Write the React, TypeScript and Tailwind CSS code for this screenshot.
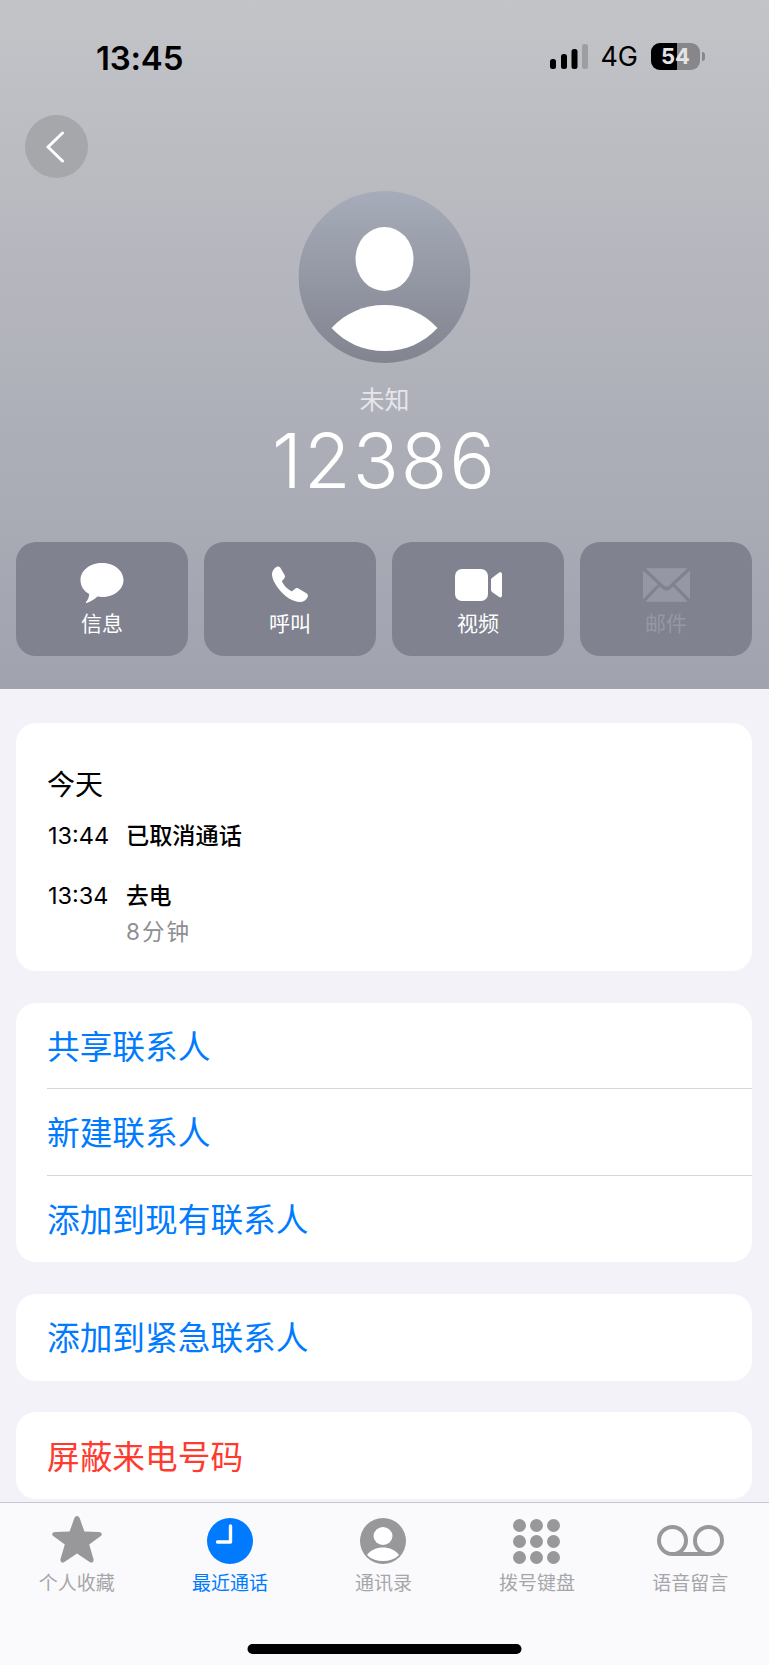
const SANS = "font-['Inter','Noto_Sans_CJK_SC',sans-serif]";

function ActionButton({ label, dim, children }: { label: string; dim?: boolean; children: React.ReactNode }) {
  return (
    <div className="flex h-[114px] flex-col items-center rounded-[20px] bg-[#80828f]">
      <div className="flex h-[64px] w-full items-end justify-center pb-[3px]">{children}</div>
      <div className={`mt-[4px] text-[21px] leading-[28px] ${dim ? "text-[#9598a4]" : "text-white"}`}>{label}</div>
    </div>
  );
}

function Row({ text, red, divider }: { text: string; red?: boolean; divider?: boolean }) {
  return (
    <div className={`ml-[31px] flex h-[86.6px] items-center pt-[3px] ${divider ? "border-b border-[#d6d6da]" : ""}`}>
      <span className={`text-[32.7px] leading-none ${red ? "text-[#ff3b30]" : "text-[#007aff]"}`}>{text}</span>
    </div>
  );
}

function Tab({ label, active, children }: { label: string; active?: boolean; children: React.ReactNode }) {
  return (
    <div className="flex flex-col items-center">
      <div className="flex h-[50px] items-end justify-center">{children}</div>
      <div className={`mt-[8px] text-[19px] leading-[24px] ${active ? "text-[#007aff]" : "text-[#a6a6aa]"}`}>{label}</div>
    </div>
  );
}

export default function App() {
  return (
    <div className={`${SANS} flex h-[1665px] w-[769px] flex-col overflow-hidden bg-[#f2f2f8] text-black`}>
      <header className="h-[689px] shrink-0 bg-gradient-to-b from-[#c3c4c8] to-[#a0a2ae]">
        <div className="flex h-[115px] items-start justify-between pl-[96px] pr-[64px] pt-[38px]">
          <span className="text-[33px] font-semibold leading-[40px] tracking-[-0.2px]">13:45</span>
          <div className="flex items-center pt-[5px]">
            <svg width="39" height="25" viewBox="0 0 39 25">
              <rect x="0" y="15" width="6" height="10" rx="2.5" fill="#000" />
              <rect x="11" y="10" width="6" height="15" rx="2.5" fill="#000" />
              <rect x="21.5" y="5" width="6" height="20" rx="2.5" fill="#000" />
              <rect x="32" y="0" width="6" height="25" rx="2.5" fill="#9d9ea2" />
            </svg>
            <span className="ml-[11px] text-[27px] leading-[26px]">4G</span>
            <div className="relative ml-[13px] flex h-[27px] w-[49px] overflow-hidden rounded-[9px] bg-[#87878b]">
              <div className="h-full w-[26px] bg-black" />
              <span className="absolute inset-0 text-center text-[22px] font-bold leading-[27px] text-[#e4e4e6]">54</span>
            </div>
            <div className="ml-[2px] h-[9px] w-[3px] rounded-r-full bg-[#87878b]" />
          </div>
        </div>
        <div className="ml-[25px] flex h-[63px] w-[63px] items-center justify-center rounded-full bg-[#a6a7ab]">
          <svg width="20" height="32" viewBox="0 0 20 32" className="mr-[3px]">
            <path d="M17.5 2 L3 16 L17.5 30" fill="none" stroke="#fff" strokeWidth="3" strokeLinecap="round" strokeLinejoin="round" />
          </svg>
        </div>
        <div className="mx-auto mt-[13px] h-[172px] w-[172px] -translate-x-[0.5px]">
          <svg width="172" height="172" viewBox="0 0 172 172">
            <defs>
              <linearGradient id="av" x1="0" y1="0" x2="0" y2="1">
                <stop offset="0" stopColor="#a6acb9" />
                <stop offset="1" stopColor="#82848f" />
              </linearGradient>
            </defs>
            <circle cx="86" cy="86" r="86" fill="url(#av)" />
            <ellipse cx="86" cy="68" rx="29" ry="32" fill="#fff" />
            <path d="M33 137 C47 122 65 114 86 114 C107 114 125 122 139 137 C125 152 107 160 86 160 C65 160 47 152 33 137 Z" fill="#fff" />
          </svg>
        </div>
        <div className="mt-[21px] text-center text-[25px] leading-[32px] text-[#e6e6ea]">未知</div>
        <div className="mt-[4px] text-center text-[76px] font-light leading-[80px] tracking-[2px] text-white">12386</div>
        <div className="mt-[42px] grid grid-cols-4 gap-[16px] pl-[16px] pr-[17px]">
          <ActionButton label="信息">
            <svg width="44" height="40" viewBox="0 0 44 40">
              <path d="M22 0 C34 0 43.5 7.5 43.5 17 C43.5 26.5 34 34 22 34 C20.5 34 19 33.9 17.5 33.6 C14 36.6 10 39 6.5 40 C6 40 5.6 39.4 6 39 C7.6 37.4 9 34.6 9.2 31 C3.6 28 0.5 23 0.5 17 C0.5 7.5 10 0 22 0 Z" fill="#fff" />
            </svg>
          </ActionButton>
          <ActionButton label="呼叫">
            <svg width="36" height="36" viewBox="0 0 36 36" className="mb-[1px]">
              <path d="M4 1.2 C5.5 0 7.5 0.4 8.5 2 L12.6 9 C13.3 10.2 13 11.4 12.2 12.4 L10.4 14.4 C10 15 10 15.6 10.3 16.2 C12 19.5 15.5 23 19 25 C19.6 25.3 20.2 25.2 20.8 24.7 L23 22.8 C24 22 25.2 21.8 26.4 22.5 L34 27 C36 28.2 36.5 30 35.2 32 C33.5 34.6 31 36 28 36 C21 36 13.5 31 8 24.5 C3 18.6 0 12.5 0 8 C0 5.4 1.8 2.8 4 1.2 Z" fill="#fff" />
            </svg>
          </ActionButton>
          <ActionButton label="视频">
            <svg width="47" height="32" viewBox="0 0 47 32" className="mb-[2px]">
              <rect x="0" y="0" width="33" height="32" rx="7" fill="#fff" />
              <path d="M36 11 C36 10 36.4 9.4 37 8.9 L44.2 3.6 C45.4 2.8 47 3.5 47 5 L47 26.6 C47 28.1 45.4 28.9 44.2 28 L37 22.9 C36.4 22.4 36 21.8 36 21 Z" fill="#fff" />
            </svg>
          </ActionButton>
          <ActionButton label="邮件" dim>
            <svg width="47" height="34" viewBox="0 0 47 34" className="mb-[1px]">
              <path d="M2.5 0.2 L44.5 0.2 L26.2 17.4 C24.6 18.9 22.4 18.9 20.8 17.4 Z" fill="#9598a4" />
              <path d="M0 2.4 L0 31.2 L14.8 16.2 Z" fill="#9598a4" />
              <path d="M47 2.4 L47 31.2 L32.2 16.2 Z" fill="#9598a4" />
              <path d="M2.4 33.8 L16.6 18.4 L19.6 21 C22 23 25 23 27.4 21 L30.4 18.4 L44.6 33.8 Z" fill="#9598a4" />
            </svg>
          </ActionButton>
        </div>
      </header>

      <main className="flex min-h-0 flex-1 flex-col gap-[31.6px] pl-[16px] pr-[17px] pt-[33.5px]">
        <section className="h-[248.5px] rounded-[20px] bg-white pl-[31px] pt-[42px]">
          <div className="text-[28px] leading-[40px]">今天</div>
          <div className="mt-[15px] flex items-start">
            <span className="ml-[1px] w-[78px] text-[23.5px] leading-[32px]">13:44</span>
            <span className="text-[23.2px] font-medium leading-[32px]">已取消通话</span>
          </div>
          <div className="mt-[28px] flex items-start">
            <span className="ml-[1px] w-[78px] text-[23.5px] leading-[32px]">13:34</span>
            <div>
              <div className="text-[22.7px] font-medium leading-[32px]">去电</div>
              <div className="mt-[4px] text-[22.5px] leading-[32px] tracking-[2px] text-[#8e8e93]">8分钟</div>
            </div>
          </div>
        </section>
        <section className="overflow-hidden rounded-[20px] bg-white">
          <Row text="共享联系人" divider />
          <Row text="新建联系人" divider />
          <Row text="添加到现有联系人" />
        </section>
        <section className="overflow-hidden rounded-[20px] bg-white">
          <Row text="添加到紧急联系人" />
        </section>
        <section className="overflow-hidden rounded-[20px] bg-white">
          <Row text="屏蔽来电号码" red />
        </section>
      </main>

      <nav className="h-[163px] shrink-0 border-t border-[#c8c8cc] bg-[#fafafc]">
        <div className="grid w-[767px] grid-cols-5 pt-[11px]">
          <Tab label="个人收藏">
            <svg width="50" height="48" viewBox="0 0 50 48">
              <path d="M25 0 C26.4 0 27.2 1 27.8 2.6 L32.4 15.6 L46.8 16 C49.6 16.1 50.8 18.2 48.8 20 L37.2 28.6 L41.4 42.8 C42.2 45.8 40 47.6 37.6 46 L25 37.6 L12.4 46 C10 47.6 7.8 45.8 8.6 42.8 L12.8 28.6 L1.2 20 C-0.8 18.2 0.4 16.1 3.2 16 L17.6 15.6 L22.2 2.6 C22.8 1 23.6 0 25 0 Z" fill="#98989b" />
            </svg>
          </Tab>
          <Tab label="最近通话" active>
            <svg width="46" height="46" viewBox="0 0 46 46">
              <circle cx="23" cy="23" r="23" fill="#007aff" />
              <path d="M23.5 8 L23.5 24 L10.5 24" fill="none" stroke="#fff" strokeWidth="3.4" strokeLinecap="round" strokeLinejoin="round" />
            </svg>
          </Tab>
          <Tab label="通讯录">
            <svg width="46" height="46" viewBox="0 0 46 46">
              <circle cx="23" cy="23" r="23" fill="#98989b" />
              <ellipse cx="23" cy="18" rx="9.5" ry="9" fill="#fff" />
              <path d="M7 37 C10.5 32 16.5 29.5 23 29.5 C29.5 29.5 35.5 32 39 37 C35 41 29.5 43 23 43 C16.5 43 11 41 7 37 Z" fill="#fff" />
            </svg>
          </Tab>
          <Tab label="拨号键盘">
            <svg width="47" height="45" viewBox="0 0 47 45" fill="#98989b">
              <circle cx="6.5" cy="6.5" r="6.5" /><circle cx="23.5" cy="6.5" r="6.5" /><circle cx="40.5" cy="6.5" r="6.5" />
              <circle cx="6.5" cy="22.5" r="6.5" /><circle cx="23.5" cy="22.5" r="6.5" /><circle cx="40.5" cy="22.5" r="6.5" />
              <circle cx="6.5" cy="38.5" r="6.5" /><circle cx="23.5" cy="38.5" r="6.5" /><circle cx="40.5" cy="38.5" r="6.5" />
            </svg>
          </Tab>
          <Tab label="语音留言">
            <svg width="67" height="31" viewBox="0 0 67 31" className="mb-[8px]" fill="none" stroke="#98989b" strokeWidth="4">
              <circle cx="15.5" cy="15.5" r="13.5" />
              <circle cx="51.5" cy="15.5" r="13.5" />
              <path d="M15.5 29 L51.5 29" />
            </svg>
          </Tab>
        </div>
        <div className="mx-auto mt-[48px] h-[10px] w-[274px] -translate-x-[0.5px] rounded-full bg-black" />
      </nav>
    </div>
  );
}
